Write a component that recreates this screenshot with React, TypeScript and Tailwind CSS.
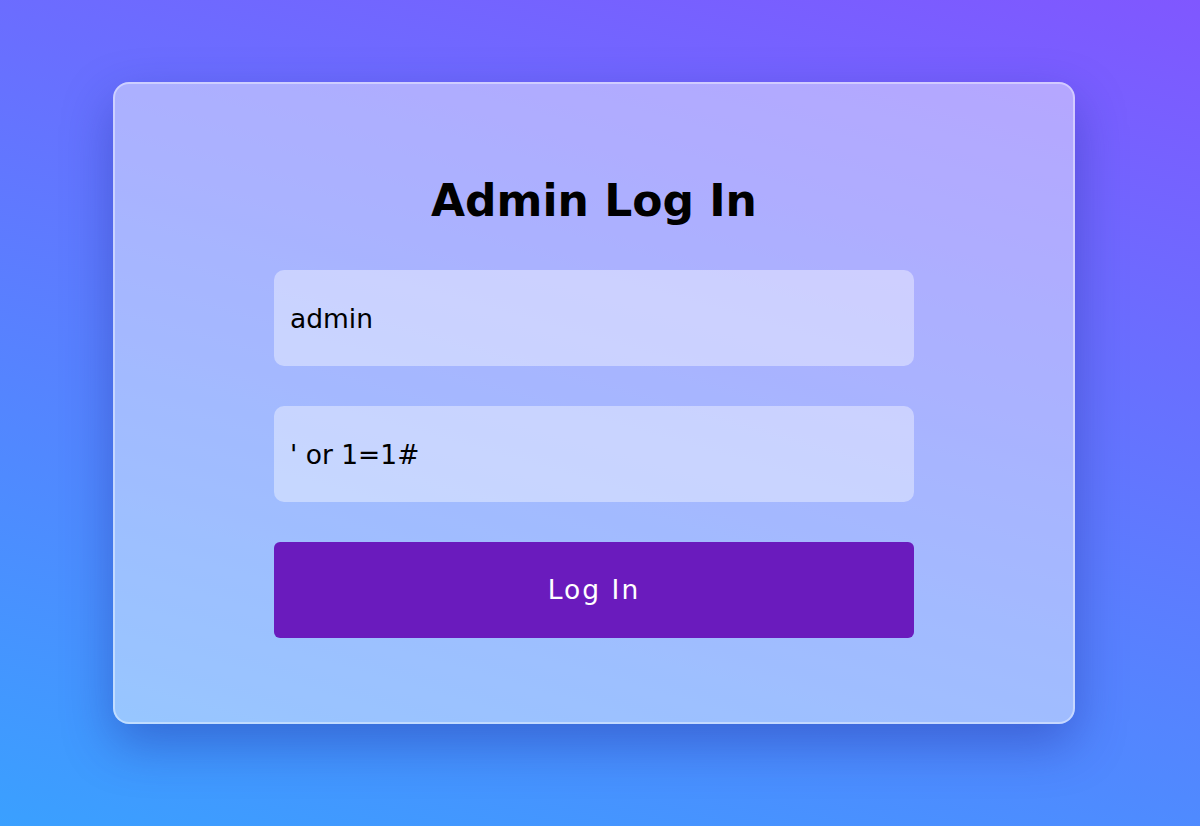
import React from "react";

export default function App() {
  return (
    <div
      className="w-[1200px] h-[826px] overflow-hidden bg-[linear-gradient(16deg,#3aa0ff,#8057ff)]"
      style={{ fontFamily: '"DejaVu Sans", sans-serif' }}
    >
      <div className="pl-[113px] pt-[82px]">
        <div className="w-[962px] h-[642px] rounded-[16px] border-2 border-white/40 bg-white/45 shadow-[0_20px_50px_rgba(30,40,150,0.4)] flex flex-col items-center pt-[91px]">
          <h1 className="text-[44px] leading-[52px] font-bold text-black">Admin Log In</h1>
          <div className="mt-[43px] w-[640px] flex flex-col gap-[40px]">
            <input
              readOnly
              value="admin"
              className="h-[96px] w-full rounded-[10px] bg-white/40 px-[16px] text-[26.5px] text-black outline-none"
              style={{ fontFamily: '"DejaVu Sans", sans-serif' }}
            />
            <input
              readOnly
              value="' or 1=1#"
              className="h-[96px] w-full rounded-[10px] bg-white/40 px-[16px] text-[26.5px] text-black outline-none"
              style={{ fontFamily: '"DejaVu Sans", sans-serif' }}
            />
            <button
              className="h-[96px] w-full rounded-[6px] bg-[#6a1bbd] text-white text-[26.5px] tracking-[2px]"
              style={{ fontFamily: '"DejaVu Sans", sans-serif' }}
            >
              Log In
            </button>
          </div>
        </div>
      </div>
    </div>
  );
}
